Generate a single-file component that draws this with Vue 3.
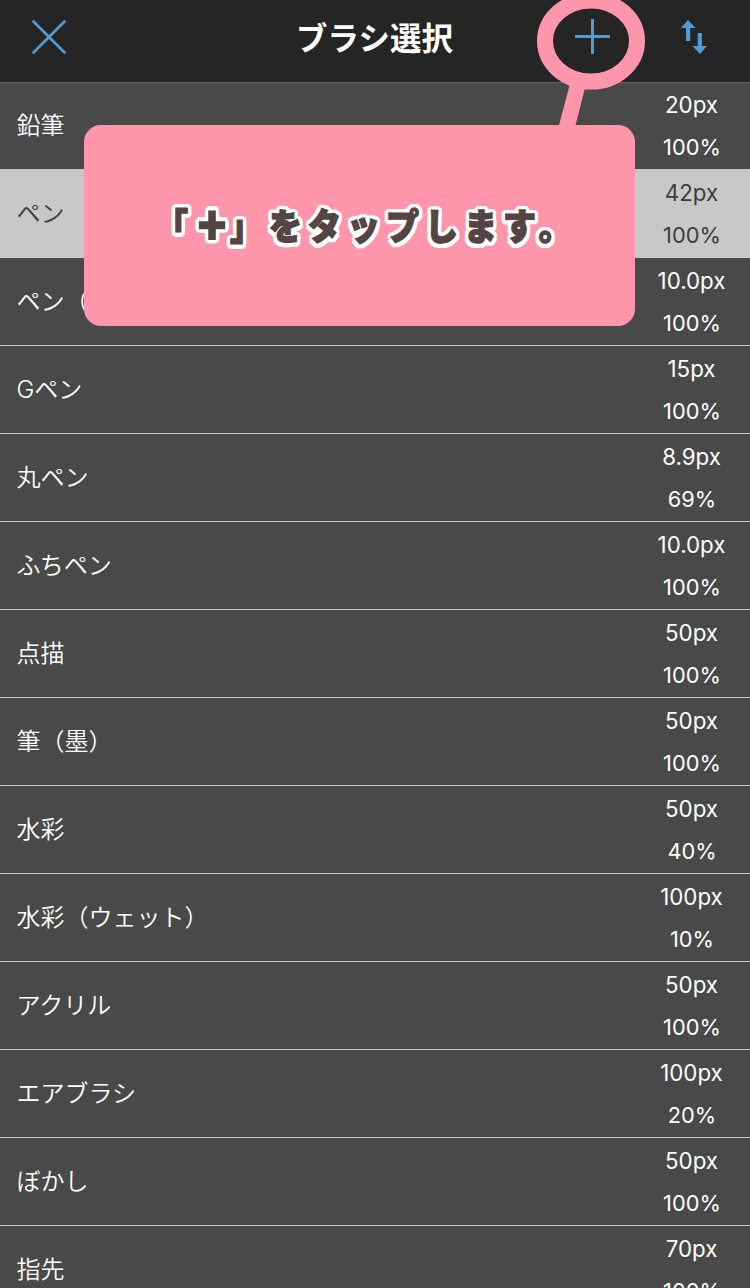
<script setup>
import { ref } from "vue";

const brushes = [
  { name: '鉛筆', size: '20px', opacity: '100%' },
  { name: 'ペン', size: '42px', opacity: '100%' },
  { name: 'ペン（', size: '10.0px', opacity: '100%' },
  { name: 'Gペン', size: '15px', opacity: '100%' },
  { name: '丸ペン', size: '8.9px', opacity: '69%' },
  { name: 'ふちペン', size: '10.0px', opacity: '100%' },
  { name: '点描', size: '50px', opacity: '100%' },
  { name: '筆（墨）', size: '50px', opacity: '100%' },
  { name: '水彩', size: '50px', opacity: '40%' },
  { name: '水彩（ウェット）', size: '100px', opacity: '10%' },
  { name: 'アクリル', size: '50px', opacity: '100%' },
  { name: 'エアブラシ', size: '100px', opacity: '20%' },
  { name: 'ぼかし', size: '50px', opacity: '100%' },
  { name: '指先', size: '70px', opacity: '100%' },
];

const selected = ref(1);
</script>

<template>
  <div class="screen">
    <header class="header">
      <svg class="icon" width="38" height="38" viewBox="0 0 38 38">
        <path d="M3.5 3.5L34.5 34.5M34.5 3.5L3.5 34.5" stroke-width="2.7" stroke-linecap="round" />
      </svg>
      <h1>ブラシ選択</h1>
      <div class="actions">
        <svg class="icon" width="35" height="35" viewBox="0 0 35 35">
          <path d="M17.5 0V35M0 17.5H35" stroke-width="3" />
        </svg>
        <svg class="sort" width="26" height="34" viewBox="0 0 26 34">
          <path d="M7 0L14.5 8H9.2V21H5V8H0Z" />
          <path d="M19 34L11.5 26H16.7V13H20.9V26H26Z" />
        </svg>
      </div>
    </header>

    <ul class="list">
      <li v-for="(brush, index) in brushes" :key="index" :class="{ active: index === selected }" @click="selected = index">
        <span class="name">{{ brush.name }}</span>
        <div class="values">
          <p>{{ brush.size }}</p>
          <p class="opacity">{{ brush.opacity }}</p>
        </div>
      </li>
    </ul>

    <svg class="pointer" width="750" height="130" viewBox="0 0 750 130">
      <ellipse cx="591" cy="41" rx="46" ry="40.5" />
      <path d="M570.5 82L585.5 86L575 127L558.5 127Z" />
    </svg>
    <div class="callout">
      <p>「<span class="plus">+</span>」をタップします。</p>
    </div>
  </div>
</template>

<style>
body {
  margin: 0;
  background: #494949;
}
</style>

<style scoped>
.screen {
  position: relative;
  width: 750px;
  height: 1288px;
  overflow: hidden;
  background: #494949;
  color: #fff;
  font-family: Inter, "Noto Sans CJK JP", sans-serif;
}

.header {
  box-sizing: border-box;
  display: grid;
  grid-template-columns: 1fr auto 1fr;
  align-items: center;
  height: 83px;
  margin-bottom: -1px;
  padding: 0 43px 9px 30px;
  background: #252525;
  border-bottom: 1px solid #666;
}

.header h1 {
  margin: 5px 0 0 12px;
  font-size: 31.5px;
  font-weight: 700;
  line-height: 40px;
}

.icon {
  fill: none;
  stroke: #539bd5;
}

.actions {
  display: flex;
  align-items: center;
  justify-content: flex-end;
  gap: 71px;
}

.sort {
  fill: #539bd5;
}

.list {
  margin: 0;
  padding: 0;
  list-style: none;
}

.list li {
  box-sizing: border-box;
  display: flex;
  align-items: center;
  justify-content: space-between;
  height: 88px;
  padding: 0 8px 0 16.5px;
  border-bottom: 1px solid #c8c8c8;
}

.list .active {
  background: #c8c8c8;
  color: #3c3c3c;
}

.name {
  padding-top: 1px;
  font-size: 24px;
  font-weight: 350;
  line-height: 36px;
}

.values {
  width: 101px;
  padding-top: 1px;
  font-size: 22.3px;
  font-weight: 375;
  line-height: 43px;
  text-align: center;
}

.values p {
  margin: 0;
}

.values .opacity {
  padding-left: 1px;
  font-size: 21.8px;
}

.pointer {
  position: absolute;
  top: 0;
  left: 0;
  fill: #ff96ab;
  pointer-events: none;
}

.pointer ellipse {
  fill: none;
  stroke: #ff96ab;
  stroke-width: 16;
}

.callout {
  position: absolute;
  top: 125px;
  left: 84px;
  box-sizing: border-box;
  display: flex;
  align-items: center;
  width: 551px;
  height: 201px;
  padding: 0 0 1px 71px;
  border-radius: 17px;
  background: #ff96ab;
}

.callout p {
  margin: 0;
  color: #534543;
  font-family: "Noto Sans CJK JP", sans-serif;
  font-size: 33px;
  font-weight: 900;
  line-height: 56px;
  letter-spacing: 6px;
  white-space: nowrap;
  transform: scaleY(1.1);
  -webkit-text-stroke: 1.4px #534543;
  text-shadow:
    4px 0 #fff, -4px 0 #fff, 0 4px #fff, 0 -4px #fff,
    3px 3px #fff, -3px 3px #fff, 3px -3px #fff, -3px -3px #fff,
    4px 2px #fff, -4px 2px #fff, 4px -2px #fff, -4px -2px #fff,
    2px 4px #fff, -2px 4px #fff, 2px -4px #fff, -2px -4px #fff;
}

.plus {
  display: inline-block;
  width: 36px;
  font-size: 47px;
  line-height: 36px;
  letter-spacing: 0;
  text-align: center;
  vertical-align: -4px;
}
</style>
